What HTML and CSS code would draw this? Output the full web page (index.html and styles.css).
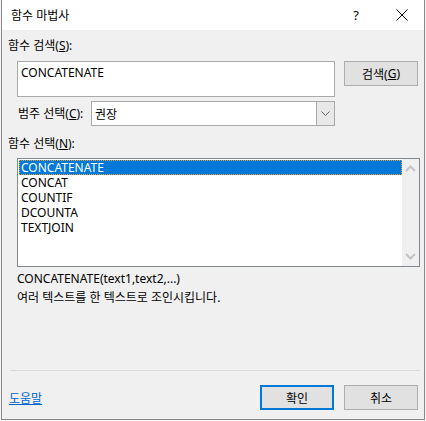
FILE: index.html
```html
<!DOCTYPE html>
<html lang="ko">
<head>
<meta charset="utf-8">
<link rel="stylesheet" href="styles.css">
</head>
<body>
<div class="window">
  <div class="titlebar">
    <span class="title">함수 마법사</span>
    <span class="help">?</span>
    <svg class="close" width="12" height="12" viewBox="0 0 12 12"><path d="M0.5 0.5 L11.5 11.5 M11.5 0.5 L0.5 11.5" stroke="#000" stroke-width="1" fill="none"/></svg>
  </div>
  <div class="content">
    <div class="label l1">함수 검색(<u>S</u>):</div>
    <div class="row search-row">
      <div class="textbox">CONCATENATE</div>
      <div class="btn">검색(<u>G</u>)</div>
    </div>
    <div class="row cat-row">
      <span class="label cat-label">범주 선택(<u>C</u>):</span>
      <div class="combo">
        <span class="combo-text">권장</span>
        <span class="combo-btn"><svg width="9" height="6" viewBox="0 0 9 6"><path d="M0.5 0.5 L4.5 4.5 L8.5 0.5" stroke="#606060" fill="none"/></svg></span>
      </div>
    </div>
    <div class="label l3">함수 선택(<u>N</u>):</div>
    <div class="listbox">
      <div class="items">
        <div class="item sel">CONCATENATE</div>
        <div class="item">CONCAT</div>
        <div class="item">COUNTIF</div>
        <div class="item">DCOUNTA</div>
        <div class="item">TEXTJOIN</div>
      </div>
      <div class="scroll">
        <svg width="11" height="7" viewBox="0 0 11 7"><path d="M1 6 L5.5 1.5 L10 6" stroke="#c4c4c4" stroke-width="2" fill="none"/></svg>
        <svg width="11" height="7" viewBox="0 0 11 7"><path d="M1 1 L5.5 5.5 L10 1" stroke="#c4c4c4" stroke-width="2" fill="none"/></svg>
      </div>
    </div>
    <div class="desc">
      <div>CONCATENATE(text1,text2,...)</div>
      <div>여러 텍스트를 한 텍스트로 조인시킵니다.</div>
    </div>
    <div class="sep"></div>
    <div class="footer">
      <a class="link" href="#">도움말</a>
      <div class="btn default">확인</div>
      <div class="btn cancel">취소</div>
    </div>
  </div>
</div>
</body>
</html>
```
FILE: styles.css
```css
html, body {
  margin: 0;
  padding: 0;
}
body {
  background: #f7f7f7;
  font-family: "Noto Sans", "Noto Sans CJK KR", sans-serif;
  font-size: 12px;
  color: #000;
  width: 426px;
  height: 421px;
  overflow: hidden;
}
.window {
  box-sizing: border-box;
  margin-left: 1px;
  width: 424px;
  height: 420px;
  background: #f0f0f0;
  border: 1px solid #888888;
  border-top: none;
  display: flex;
  flex-direction: column;
}
.titlebar {
  flex: none;
  height: 30px;
  background: #ffffff;
  display: flex;
  align-items: center;
  padding-left: 9px;
}
.title {
  flex: 1;
  font-size: 12px;
  margin-top: -1px;
}
.help {
  font-size: 13px;
  margin-right: 37px;
  margin-top: -1px;
}
.close {
  margin-right: 16px;
  margin-top: -1px;
}
.content {
  flex: 1;
  display: flex;
  flex-direction: column;
  padding-left: 6px;
  padding-bottom: 9px;
}
.label {
  line-height: 16px;
  white-space: nowrap;
}
u { text-decoration: underline; text-underline-offset: 1px; }
.l1 {
  margin-top: 8px;
}
.row {
  display: flex;
}
.search-row {
  margin-top: 7px;
  padding-left: 9px;
  align-items: flex-start;
}
.textbox {
  box-sizing: border-box;
  width: 318px;
  height: 36px;
  background: #fff;
  border: 1px solid #a9a9a9;
  padding: 3px 0 0 3px;
  line-height: 16px;
}
.btn {
  box-sizing: border-box;
  width: 74px;
  height: 25px;
  background: #e1e1e1;
  border: 1px solid #adadad;
  display: flex;
  align-items: center;
  justify-content: center;
  margin-left: 9px;
}
.cat-row {
  margin-top: 4px;
  padding-left: 10px;
  align-items: center;
}
.cat-label {
  width: 73px;
}
.combo {
  box-sizing: border-box;
  width: 244px;
  height: 25px;
  background: #fff;
  border: 1px solid #a9a9a9;
  display: flex;
  align-items: stretch;
}
.combo-text {
  flex: 1;
  padding-left: 3px;
  display: flex;
  align-items: center;
}
.combo-btn {
  width: 17px;
  background: #e8e8e8;
  border-left: 1px solid #a9a9a9;
  display: flex;
  align-items: center;
  justify-content: center;
}
.l3 {
  margin-top: 10px;
}
.listbox {
  box-sizing: border-box;
  margin: 6px 0 0 9px;
  width: 403px;
  height: 109px;
  border: 1px solid #828790;
  background: #fff;
  display: flex;
  padding: 1px 0 1px 1px;
}
.items {
  flex: 1;
}
.item {
  height: 15px;
  line-height: 15px;
  padding-left: 2px;
  white-space: nowrap;
  overflow: hidden;
}
.item.sel {
  background: #0078d7;
  color: #fff;
  outline: 1px dotted #e8a040;
  outline-offset: -1px;
}
.scroll {
  width: 17px;
  background: #f0f0f0;
  display: flex;
  flex-direction: column;
  align-items: center;
  justify-content: space-between;
  padding: 6px 0 6px;
  margin-top: -1px;
  margin-bottom: -1px;
}
.desc {
  margin: 2px 0 0 9px;
  line-height: 19px;
}
.sep {
  margin: auto 0 0 2px;
  width: 410px;
  height: 1px;
  background: #dadada;
}
.footer {
  display: flex;
  align-items: center;
  margin-top: 14px;
  padding-left: 1px;
  padding-right: 6px;
}
.link {
  flex: 1;
  color: #0066cc;
  text-decoration: underline;
  margin-top: 1px;
}
.btn.default {
  border: 2px solid #0078d7;
  margin-left: 0;
}
.btn.cancel {
  margin-left: 10px;
}
```
